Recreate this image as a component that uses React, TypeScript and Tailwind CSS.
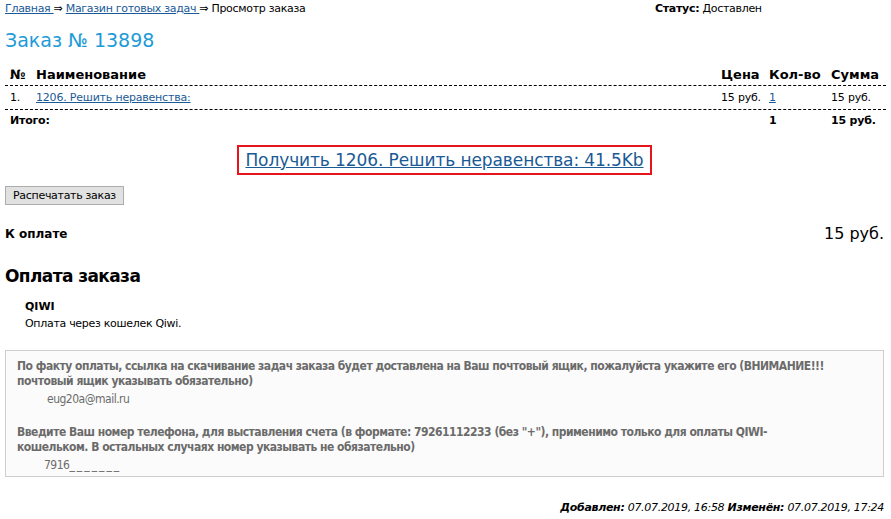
const tahoma = "font-['Tahoma','DejaVu_Sans',sans-serif]";

export default function App() {
  return (
    <div className="min-h-[519px] w-[891px] bg-white px-[5px] text-black font-['DejaVu_Sans',sans-serif]">
      {/* крошки + статус */}
      <div className="flex h-[16px] items-center text-[11px] leading-none">
        <div className="w-[650px] tracking-[-0.3px]">
          <a href="#" className="text-[#1a5a96] underline">Главная </a>
          <span> ⇒ </span>
          <a href="#" className="text-[#1a5a96] underline">Магазин готовых задач </a>
          <span> ⇒ Просмотр заказа</span>
        </div>
        <div className="tracking-[-0.3px]">
          <b>Статус:</b> Доставлен
        </div>
      </div>

      <h1 className="mt-[12px] text-[19px] leading-[24px] text-[#1d9bd7]">Заказ № 13898</h1>

      {/* таблица заказа */}
      <div className="mt-[16px] text-[11px]">
        <div className="flex items-end border-b border-dashed border-black pb-[3px] text-[13px] font-bold leading-[14px]">
          <div className="w-[26px] pl-[5px]">№</div>
          <div className="flex-1 pl-[5px]">Наименование</div>
          <div className="w-[48px]">Цена</div>
          <div className="w-[62px]">Кол-во</div>
          <div className="w-[55px]">Сумма</div>
        </div>
        <div className="flex h-[24px] items-center border-b border-dashed border-black pt-[2px] tracking-[-0.2px]">
          <div className="w-[26px] pl-[5px]">1.</div>
          <div className="flex-1 pl-[5px]">
            <a href="#" className="text-[#1a5a96] underline">1206. Решить неравенства:</a>
          </div>
          <div className="w-[48px]">15 руб.</div>
          <div className="w-[62px]">
            <a href="#" className="text-[#1a5a96] underline">1</a>
          </div>
          <div className="w-[55px]">15 руб.</div>
        </div>
        <div className="flex h-[22px] items-center font-bold tracking-[-0.2px]">
          <div className="flex-1 pl-[5px]">Итого:</div>
          <div className="w-[62px]">1</div>
          <div className="w-[55px]">15 руб.</div>
        </div>
      </div>

      {/* ссылка на файл */}
      <div className="mt-[13px] flex justify-center pr-[2px]">
        <div className="flex h-[30px] items-center border-2 border-[#e8141c] px-[6px]">
          <a href="#" className="text-[17px] leading-none tracking-[-0.1px] text-[#1a5a96] underline">
            Получить 1206. Решить неравенства: 41.5Kb
          </a>
        </div>
      </div>

      <button className={`mt-[11px] h-[19px] border border-[#adadad] bg-[#e1e1e1] px-[7px] text-[11px] leading-none ${tahoma} tracking-[-0.3px]`}>
        Распечатать заказ
      </button>

      <div className="mt-[20px] flex items-start justify-between">
        <div className="text-[12px] font-bold leading-[16px]">К оплате</div>
        <div className="-mt-[2px] pr-[2px] text-[16px] leading-[20px]">15 руб.</div>
      </div>

      <h2 className="mt-[21px] text-[17px] font-bold leading-[22px] tracking-[-0.6px]">Оплата заказа</h2>

      <div className="mt-[12px] pl-[20px] text-[11px]">
        <div className="font-bold leading-[16px]">QIWI</div>
        <div className="mt-[2px] leading-[14px] tracking-[-0.3px]">Оплата через кошелек Qiwi.</div>
      </div>

      {/* поля оплаты */}
      <div className="mt-[19px] mr-[2px] border border-[#cfcfcf] bg-[#fbfbfb] px-[11px] pt-[8px] pb-[3px] text-[12px] font-bold leading-[15px] text-[#6b6b6b] font-['DejaVu_Sans_Condensed','DejaVu_Sans',sans-serif] tracking-[-0.5px]">
        <div>
          По факту оплаты, ссылка на скачивание задач заказа будет доставлена на Ваш почтовый ящик, пожалуйста укажите его (ВНИМАНИЕ!!!
          <br />
          почтовый ящик указывать обязательно)
        </div>
        <div className="mt-[3px] pl-[30px] font-normal">eug20a@mail.ru</div>
        <div className="mt-[18px]">
          Введите Ваш номер телефона, для выставления счета (в формате: 79261112233 (без "+"), применимо только для оплаты QIWI-
          <br />
          кошельком. В остальных случаях номер указывать не обязательно)
        </div>
        <div className="mt-[3px] pl-[27px] font-normal">
          7916<span className="tracking-[2px]">_______</span>
        </div>
      </div>

      <div className="mt-[23px] pr-[2px] text-right text-[11px] italic tracking-[-0.3px]">
        <b>Добавлен:</b> 07.07.2019, 16:58 <b>Изменён:</b> 07.07.2019, 17:24
      </div>
    </div>
  );
}
